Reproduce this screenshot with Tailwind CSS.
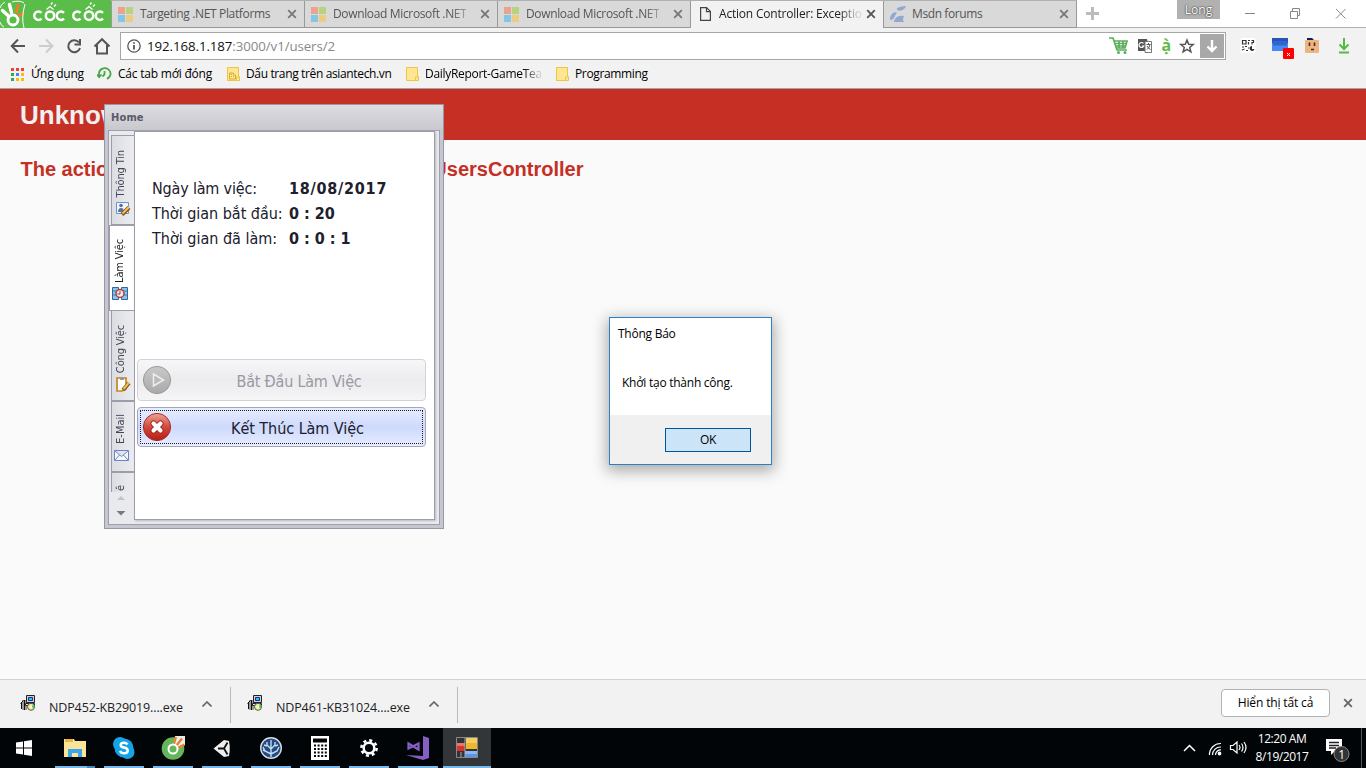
<!DOCTYPE html>
<html lang="vi">
<head>
<meta charset="utf-8">
<title>Action Controller: Exception caught</title>
<script src="https://cdn.jsdelivr.net/npm/@tailwindcss/browser@4"></script>
</head>
<body class="relative flex h-[768px] w-[1366px] flex-col overflow-hidden bg-[#fafafa] font-['Open_Sans','Noto_Sans',sans-serif] text-xs text-black">
<svg width="0" height="0" class="absolute">
  <defs>
    <symbol id="ms" viewBox="0 0 15 15"><path fill="#eca38e" d="M0 0h7v7H0z"/><path fill="#b7d283" d="M8 0h7v7H8z"/><path fill="#84c6e6" d="M0 8h7v7H0z"/><path fill="#edcc82" d="M8 8h7v7H8z"/></symbol>
    <symbol id="x" viewBox="0 0 10 10"><path d="M1.200 1.200l7.600 7.600M8.800 1.200L1.200 8.800" stroke="currentColor" stroke-width="1.800"/></symbol>
    <symbol id="folder" viewBox="0 0 13 15"><path d="M.5 .5h11v9h1v4h-12z" fill="#fee692" stroke="#eac648"/><path d="M9.500 13.500v-3.500h2" fill="none" stroke="#eac648"/></symbol>
    <symbol id="setup" viewBox="0 0 16 16"><path d="M2 5h5v10H2z" fill="#999"/><path d="M.5 8.500l3-3M1.500 14V8M4.500 5v10" stroke="#111"/><path d="M6.500 .5h8v7h-8z" fill="#d0d0d0" stroke="#222"/><path d="M8.500 2.500h4v3h-4z" fill="#18d0f0" stroke="#1b28a0"/><path d="M5.500 8.500h9v2h-9z" fill="#eee" stroke="#222"/><circle cx="11" cy="11.800" r="3.500" fill="#f0ef90" stroke="#555"/><path d="M11 11.500l3-2v4z" fill="#3ecb6c"/><circle cx="11" cy="11.800" r="1" fill="#fff"/></symbol>
    <linearGradient id="redG" x1="0" y1="0" x2="0" y2="1"><stop offset="0" stop-color="#eba596"/><stop offset=".5" stop-color="#d24a3c"/><stop offset="1" stop-color="#b51d18"/></linearGradient>
    <linearGradient id="grayG" x1="0" y1="0" x2="0" y2="1"><stop offset="0" stop-color="#c9c9c9"/><stop offset="1" stop-color="#a9a9a9"/></linearGradient>
  </defs>
</svg>

<!-- Tab strip -->
<header class="flex h-7 shrink-0 bg-white">
  <div class="flex h-7 w-[111px] shrink-0 items-center bg-[#5bbd49]">
    <svg width="111" height="28" viewBox="0 0 111 28" fill="none"><circle cx="13" cy="20" r="5" stroke="#fff" stroke-width="2.800"/><path d="M2.500 10.500l5.500 5M9.500 4.500l2 8" stroke="#fff" stroke-width="3.400" stroke-linecap="round"/><path d="M16.500 12l1.500-7M19 15.500l3.500-1.500" stroke="#f47b2c" stroke-width="2.800" stroke-linecap="round"/><path d="M12 2q8-2 12 1M25 4q-4 14-1 24M0 8Q1 4 5 2M0 22q1 4 4 5" stroke="#fff"/>
      <g stroke="#fff" stroke-width="2.500"><path d="M41.500 12.800a4.200 4.200 0 1 0 0 5.800"/><circle cx="50" cy="15.700" r="4.200"/><path d="M64 12.800a4.200 4.200 0 1 0 0 5.800"/><path d="M80.500 12.800a4.200 4.200 0 1 0 0 5.800"/><circle cx="89" cy="15.700" r="4.200"/><path d="M103 12.800a4.200 4.200 0 1 0 0 5.800"/></g>
      <path d="M46.500 9.500l3.500-3 3.500 3M85.500 9.500l3.500-3 3.500 3M51 4.500l1.500-2M54 6.500l2-2M90 4.500l1.500-2M93 6.500l2-2" stroke="#fff" stroke-width="1.300"/></svg>
  </div>
  <nav class="flex h-7 border-t border-[#b0b0b0] text-[#555]">
    <div class="flex w-[194px] items-center border-r border-b border-l border-[#999] bg-[#d9d9d9] pr-[7px] pl-1.5"><svg class="size-[15px] shrink-0"><use href="#ms"/></svg><span class="ml-[7px] tracking-[-0.35px] whitespace-nowrap">Targeting .NET Platforms</span><svg class="ml-auto size-2.5 shrink-0 text-[#777]"><use href="#x"/></svg></div>
    <div class="flex w-[193px] items-center border-r border-b border-[#999] bg-[#d9d9d9] pr-[7px] pl-1.5"><svg class="size-[15px] shrink-0"><use href="#ms"/></svg><span class="ml-[7px] tracking-[-0.35px] whitespace-nowrap [mask-image:linear-gradient(to_right,black_118px,#0005_135px)]">Download Microsoft .NET</span><svg class="ml-auto size-2.5 shrink-0 text-[#777]"><use href="#x"/></svg></div>
    <div class="flex w-[193px] items-center border-r border-b border-[#999] bg-[#d9d9d9] pr-[7px] pl-1.5"><svg class="size-[15px] shrink-0"><use href="#ms"/></svg><span class="ml-[7px] tracking-[-0.35px] whitespace-nowrap [mask-image:linear-gradient(to_right,black_118px,#0005_135px)]">Download Microsoft .NET</span><svg class="ml-auto size-2.5 shrink-0 text-[#777]"><use href="#x"/></svg></div>
    <div class="flex w-[192px] items-center border-b border-[#f2f2f2] bg-[#f2f2f2] pr-[7px] pl-[9px] text-[#222]"><svg width="11" height="14" viewBox="0 0 11 14" fill="none" stroke="#444" stroke-width="1.200"><path d="M.6.600h6l3.800 3.800v9H.6zM6.500.600v4h4"/></svg><span class="ml-2 tracking-[-0.2px] whitespace-nowrap [mask-image:linear-gradient(to_right,black_120px,#0002_140px)]">Action Controller: Exceptio</span><svg class="ml-auto size-2.5 shrink-0 text-[#555]"><use href="#x"/></svg></div>
    <div class="flex w-[194px] items-center border-r border-b border-l border-[#999] bg-[#d9d9d9] pr-[7px] pl-1.5"><svg width="16" height="16" viewBox="0 0 16 16"><path fill="#92a9cf" d="M7 2q4-2 9-2l-1 2q-3 4-8 2zM0 14q0-8 7-8L4 12q-1 2-4 2zM4 15q2-6 10-5l-1 3q0 3 2 3H4z"/></svg><span class="ml-1.5 tracking-[-0.4px]">Msdn forums</span><svg class="ml-auto size-2.5 shrink-0 text-[#777]"><use href="#x"/></svg></div>
  </nav>
  <div class="flex flex-1 border-b border-[#b0b0b0] pl-[9px]">
    <svg class="mt-[7px]" width="13" height="13"><path d="M6.500 0v13M0 6.500h13" stroke="#bbb" stroke-width="3"/></svg>
    <div class="ml-[78px] flex h-[19px] w-[43px] items-center justify-center bg-[#b1b1b1] text-xs text-white [text-shadow:0_0_2px_#333,0_0_1px_#333]">Long</div>
    <svg class="mt-2 ml-[25px]" width="102" height="12" fill="none" stroke="#888"><path d="M0 5.500h10M45.500 3.500h7v7h-7zM47.500 3V.5h7v7H53M91 1l9.500 9.500M100.500 1L91 10.500"/></svg>
  </div>
</header>

<!-- Toolbar -->
<section class="flex h-9 shrink-0 items-center bg-[#f2f2f2] pl-2.5">
  <svg class="shrink-0" width="110" height="20" viewBox="0 0 110 20" fill="none" stroke="#555" stroke-width="2"><path d="M15 10H2M8 3.500L1.700 10 8 16.500"/><path stroke="#ccc" d="M29 10h13M36 3.500l6.500 6.500-6.500 6.500"/><path d="M69 6.500A6 6 0 1 0 70 12M70 3v5.500h-5.500"/><path d="M84.500 10.500L92 3.200l7.500 7.300M87 9v8.500h10V9"/></svg>
  <div class="flex h-7 w-[1106px] shrink-0 items-center border border-[#a6a6a6] bg-white">
    <svg class="ml-1.5 shrink-0" width="14" height="14" fill="none" stroke="#555" stroke-width="1.300"><circle cx="7" cy="7" r="6.200"/><path d="M7 6v4.500M7 3.200v1.600" stroke-width="1.800"/></svg>
    <span class="ml-1.5 w-[959px] pt-px text-[13.300px] tracking-[-0.09px] text-[#888]"><span class="text-[#111]">192.168.1.187</span>:3000/v1/users/2</span>
    <svg class="shrink-0" width="118" height="26" viewBox="0 0 118 26" fill="none">
      <path d="M3 5h4l4 12h10M8.500 8H21l-2 7h-8.500M9 10.500h12M10 13h10M13 8v7M17 8v7" stroke="#5bae5b" stroke-width="1.700"/><circle cx="12.500" cy="19.500" r="1.500" fill="#5bae5b"/><circle cx="19" cy="19.500" r="1.500" fill="#5bae5b"/>
      <path d="M32 6h9l3 12H32z" fill="#555"/><path d="M39 8.500h6.500v11H39z" fill="#fff" stroke="#777"/><path d="M37.500 10.500a2.500 2.500 0 1 0 .3 2.500h-2" stroke="#fff" stroke-width="1.200"/><path d="M40.500 11.500h4M42.500 10v1.500M44 11.500q-1 4-3 5M41 13q1 2 3.500 3.500" stroke="#555"/>
      <text x="55.500" y="17.500" fill="#62bb46" font-family="Noto Sans" font-weight="700" font-size="16">ạ̀</text>
      <path d="M81 7l1.700 4.300 4.500.2-3.500 2.900 1.200 4.400-3.900-2.500-3.900 2.500 1.200-4.400-3.500-2.900 4.500-.2z" stroke="#555" stroke-width="1.500"/>
      <path d="M94 1h24v24H94z" fill="#a8a8a8"/><path d="M106 7v11M101.500 13.500l4.500 4.500 4.500-4.500" stroke="#fff" stroke-width="2.400"/>
    </svg>
  </div>
  <svg class="ml-[14px] shrink-0" width="116" height="28" viewBox="0 0 116 28" fill="none">
    <rect x=".5" y="6" width="15" height="15" rx="2" fill="#fff"/><path d="M2.500 8.500H6V12H2.500zM8 8.500h2M11.500 8.500h2v2h-1.500v2M8.500 10v2.500M2 15h2M5 14.500h2M2 18l2.500-1M6 18.500h2M8 16h1.500" stroke="#333" stroke-width="1.200"/><path d="M12 14a2.500 2.500 0 1 0 2.500 3H12z" fill="#333"/>
    <path d="M32 8h16v11H32z" fill="#4888f0"/><path d="M32 6h16v5H32z" fill="#2855b8"/><path d="M33 9h14v4.500H33z" fill="#2e66d2"/><rect x="43" y="16" width="11" height="11" rx="1" fill="#f00"/><path d="M47 21l3 3M50 21l-3 3" stroke="#fff"/>
    <rect x="65" y="8" width="14" height="13" rx="1" fill="#f0b480"/><path d="M67 6h5l2 2h-7z" fill="#152050"/><path d="M69.500 10.500v3.500M74.500 10.500v3.500M71 17.500h3" stroke="#333" stroke-width="1.600"/>
    <path d="M104 6v11M99.500 12.500l4.500 4.500 4.500-4.500M99 20.500h10" stroke="#55b944" stroke-width="2"/>
  </svg>
</section>

<!-- Bookmarks -->
<section class="flex h-[25px] shrink-0 items-center border-b border-[#a0a4a8] bg-[#f2f2f2] pb-[4px] pl-[11px] whitespace-nowrap">
  <svg class="shrink-0" width="13" height="13"><path fill="#ea4335" d="M0 0h3v3H0zM5 0h3v3H5zM10 0h3v3h-3z"/><path fill="#34a853" d="M0 5h3v3H0zM0 10h3v3H0z"/><path fill="#4285f4" d="M5 5h3v3H5z"/><path fill="#fbbc05" d="M10 5h3v3h-3zM5 10h3v3H5zM10 10h3v3h-3z"/></svg>
  <span class="ml-[7px] w-[66px] tracking-[-0.25px]">Ứng dụng</span>
  <svg class="shrink-0" width="15" height="14" fill="none" stroke="#4aa648" stroke-width="1.800"><path d="M2 9.500V6a5.800 5.500 0 1 1 8 5.800M0 7.500l2.200 2.700L4.500 7.500M7.500 4v3.500L5.500 9.500"/></svg>
  <span class="ml-1.5 w-[109px] tracking-[-0.22px]">Các tab mới đóng</span>
  <svg class="shrink-0" width="13" height="15"><use href="#folder"/><path d="M2.500 12V6h4v2h2v4zM4 7.500h1M4 9.500h1M6 9.500h1" stroke="#d9a92c" fill="none"/></svg>
  <span class="ml-1.5 w-[160px] tracking-[-0.36px]">Dấu trang trên asiantech.vn</span>
  <svg class="shrink-0" width="13" height="15"><use href="#folder"/></svg>
  <span class="ml-1.5 w-[131px]"><span class="inline-block tracking-[-0.3px] [mask-image:linear-gradient(to_right,black_98px,#0001_117px)]">DailyReport-GameTea</span></span>
  <svg class="shrink-0" width="13" height="15"><use href="#folder"/></svg>
  <span class="ml-1.5 tracking-[-0.35px]">Programming</span>
</section>

<!-- Page -->
<main class="flex flex-1 flex-col font-['Liberation_Sans',Arial,sans-serif] font-bold">
  <h1 class="h-[51px] bg-[#c52f24] pt-[11px] pl-5 text-[26px] leading-[31px] text-[#f0f0f0]">Unknown action</h1>
  <h2 class="flex w-[583.500px] justify-between pt-[17px] pl-[20.500px] text-xl leading-[25px] text-[#c52f24]"><span>The action could not be found for</span><span>UsersController</span></h2>
</main>

<!-- Downloads -->
<section class="flex h-[49px] shrink-0 items-center border-t border-[#d2d2d2] bg-[#f2f2f2] pl-5 text-[#222]">
  <svg class="mb-0.5 size-4"><use href="#setup"/></svg><span class="ml-[13px] w-[153px] pt-2 text-[12.500px] tracking-[-0.13px]">NDP452-KB29019....exe</span>
  <svg width="10" height="6" fill="none" stroke="#666" stroke-width="1.600"><path d="M.5 5.500L5 1l4.500 4.500"/></svg>
  <span class="mt-0.5 ml-[18px] h-9 w-px bg-[#bbb]"></span>
  <svg class="mb-0.5 ml-4 size-4"><use href="#setup"/></svg><span class="ml-[13px] w-[153px] pt-2 text-[12.500px] tracking-[-0.13px]">NDP461-KB31024....exe</span>
  <svg width="10" height="6" fill="none" stroke="#666" stroke-width="1.600"><path d="M.5 5.500L5 1l4.500 4.500"/></svg>
  <span class="mt-0.5 ml-[18px] h-9 w-px bg-[#bbb]"></span>
  <button class="mr-[13px] mb-0.5 ml-auto h-7 w-[109px] rounded-sm border border-[#b2b2b2] bg-white tracking-[-0.15px] text-black">Hiển thị tất cả</button>
  <svg class="mr-[13px] mb-0.5 size-2.5 text-[#666]"><use href="#x"/></svg>
</section>

<!-- Taskbar -->
<footer class="flex h-10 shrink-0 bg-[#020507] text-white">
  <div class="flex w-[51px] items-center justify-center"><svg class="mr-[3px]" width="16" height="16" fill="#fff"><path d="M0 2.500l7-1v6H0zM8 1.300L16 0v7.500H8zM0 8.500h7v6l-7-1zM8 8.500h8V16l-8-1.200z"/></svg></div>
  <div class="flex gap-[1px]">
    <div class="flex w-12 flex-col items-center justify-between"><svg class="mt-[10px]" width="22" height="20"><path d="M0 1h10l1 2h11v16H0z" fill="#fbe397"/><path d="M1 1h8v3H1z" fill="#e9b93e"/><path d="M4 19v-8h14v8h-4v-4H8v4z" fill="#3aa7e8"/></svg><div class="flex h-0.5 w-10"><span class="w-8 bg-[#76b9ed]"></span><span class="flex-1 bg-[#4d85b0]"></span></div></div>
    <div class="flex w-12 flex-col items-center justify-between"><svg class="mt-2" width="24" height="24"><circle cx="8" cy="8" r="7" fill="#15a3e8"/><circle cx="15.500" cy="16" r="7" fill="#15a3e8"/><circle cx="12" cy="12" r="9.500" fill="#15a3e8"/><path d="M15.500 8.500Q14 6.500 11.500 6.700 8.500 7 8.700 9.200 9 11 12 11.500q3.700.7 3.700 3 0 2.700-3.500 2.800Q9 17.300 8 15" stroke="#fff" stroke-width="2.500" fill="none"/></svg><span class="h-0.5 w-10 bg-[#76b9ed]"></span></div>
    <div class="flex w-12 flex-col items-center justify-between"><svg class="mt-2" width="24" height="24" fill="none"><circle cx="12" cy="12.500" r="11.300" fill="#63b75a"/><path d="M13 9L14 0h10v9l-7 4z" fill="#e8efe6"/><path d="M13 8.500L15 1M16.500 12l7-3.500" stroke="#f07a2c" stroke-width="2"/><path d="M15.500 9.500L21 2.500" stroke="#f07a2c" stroke-width="2.200"/><circle cx="12" cy="13" r="4.500" fill="#63b75a" stroke="#fff" stroke-width="2"/></svg><span class="h-0.5 w-10 bg-[#76b9ed]"></span></div>
    <div class="flex w-12 flex-col items-center justify-between"><svg class="mt-[11px]" width="18" height="19"><path d="M.5 9.500L11 1l5 1 .7 5v5L16 17l-5 1z" fill="#eee"/><path d="M5 9.500h6l3.500-6M11 9.500l3.500 6" stroke="#111" stroke-width="1.800" fill="none"/></svg><span class="h-0.5 w-10 bg-[#76b9ed]"></span></div>
    <div class="flex w-12 flex-col items-center justify-between"><svg class="mt-2" width="24" height="24" fill="none"><circle cx="12" cy="12" r="10.300" fill="#244c83" stroke="#d5dde8" stroke-width="1.400"/><path d="M12 21V4M12 18l-6-3-2-4M6 15l-2-1M12 13L8 9V6M12 18l6-3 2-4M12 13l4-4V6M8 10l-3-1M16 10l3-1" stroke="#c6dced" stroke-width="1.400"/></svg><span class="h-0.5 w-10 bg-[#76b9ed]"></span></div>
    <div class="flex w-12 flex-col items-center justify-between"><svg class="mt-2" width="18" height="24"><path d="M0 0h18v24H0z" fill="#fff"/><path d="M2 2.500h14v4H2z" fill="#020507"/><path d="M3 9.500h13M3 13h13M3 16.500h13M3 20h13" stroke="#020507" stroke-width="1.800" stroke-dasharray="2 1.600"/></svg><span class="h-0.5 w-10 bg-[#76b9ed]"></span></div>
    <div class="flex w-12 flex-col items-center justify-between"><svg class="mt-[11px]" width="18" height="18" fill="none" stroke="#fff"><circle cx="9" cy="9" r="5.300" stroke-width="2.500"/><circle cx="9" cy="9" r="7.600" stroke-width="2.600" stroke-dasharray="3 2.969"/></svg><span class="h-0.5 w-10 bg-[#76b9ed]"></span></div>
    <div class="flex w-12 flex-col items-center justify-between"><svg class="mt-2" width="24" height="24"><path d="M17 0l6 2v20l-6 2L0 19l17 1z" fill="#865fc5"/><path d="M2.500 7.500v5l10-5v6l-10-6z" fill="none" stroke="#865fc5" stroke-width="2.200"/></svg><span class="h-0.5 w-10 bg-[#76b9ed]"></span></div>
    <div class="flex w-12 flex-col items-center justify-between bg-[#333638]"><svg class="mt-[9px]" width="22" height="21"><path d="M.5.5h21v20H.5z" fill="#333" stroke="#888"/><path d="M1 6h8v8H1z" fill="#d8342c"/><path d="M1 6h8v3H1z" fill="#e6766e"/><path d="M10 1h11v11H10z" fill="#edb92c"/><path d="M10 1h11v5H10z" fill="#f3cf60"/><path d="M9 14h12v6H9z" fill="#5b96ee"/><path d="M9 14h12v3H9z" fill="#8db8f8"/><path d="M5 15v5M9 1v19" stroke="#aaa"/></svg><span class="h-0.5 w-full bg-[#76b9ed]"></span></div>
  </div>
  <div class="ml-auto flex items-center">
    <svg width="64" height="20" viewBox="0 0 64 20" fill="none" stroke="#fff" stroke-width="1.200"><path d="M1 13l5.500-5.500L12 13" stroke-width="1.500"/><path d="M26.500 17A11 11 0 0 1 38 5.500M29.500 17a8 8 0 0 1 8.500-8M32.500 17a5 5 0 0 1 5.500-5"/><circle cx="36.500" cy="15.500" r="1.300" fill="#fff"/><path d="M47.500 7.500h2.500l4-3.500v11l-4-3.500h-2.500zM56 7q2 2.500 0 5M58.500 5.500q3 4 0 8M61 4q4 5.500 0 11"/></svg>
    <div class="ml-2 w-[54px] text-center text-[12px] leading-[18px] tracking-[-0.45px] whitespace-nowrap">12:20 AM<br>8/19/2017</div>
    <svg class="mt-1 ml-4" width="27" height="26"><path d="M1 2h16v12h-7l-4 4v-4H1z" fill="#fff"/><path d="M4 5.500h10M4 8.500h10M4 11h7" stroke="#222" stroke-width="1.300"/><circle cx="16.500" cy="17" r="7.500" fill="#333" stroke="#888"/><text x="13.200" y="21.500" fill="#fff" font-size="12">1</text></svg>
    <span class="ml-[9px] h-10 w-px bg-[#555]"></span><span class="w-1"></span>
  </div>
</footer>

<!-- Home window -->
<section class="absolute top-[104px] left-[104px] flex h-[425px] w-[340px] flex-col border border-[#9798a3] bg-[#c5c6cf] px-[3px] pb-[3px] font-['DejaVu_Sans_Condensed','DejaVu_Sans','Noto_Sans',sans-serif] shadow-[inset_0_1px_#e6e6ea]">
  <div class="-mx-[3px] h-[25px] bg-linear-to-b from-[#dcdce1] to-[#c8c8cf] pt-[5px] pl-1.5 text-[11px] leading-4 font-bold tracking-[0.15px] text-[#5a5a68]">Home</div>
  <div class="flex flex-1 border border-[#9fa0ab] bg-[#e9eaee] pr-[5px] pb-1">
    <div class="flex w-[25px] shrink-0 flex-col text-[11px] text-[#444455]">
      <div class="mt-1 ml-0.5 flex h-[90px] flex-col items-center justify-end gap-1 border border-r-0 border-[#9c9da9] bg-linear-to-r from-[#dcdde2] to-[#ecedf0] pb-2"><span class="mr-1 rotate-180 tracking-[-0.15px] [writing-mode:vertical-rl]">Thông Tin</span><svg width="15" height="15" fill="none"><path d="M.5 1.500h12v11H.5z" fill="#f3f6fd" stroke="#6e92d0"/><circle cx="5" cy="4.500" r="1.800" fill="#57729b"/><path d="M2 11q0-4 3-4t3 4z" fill="#57729b"/><path d="M6 13.500l7-7" stroke="#86521a" stroke-width="4"/><path d="M6.500 12.500l6.500-6.500" stroke="#f5c057" stroke-width="2"/></svg></div>
      <div class="flex h-[86px] flex-col items-center justify-end gap-1 border-y border-l border-[#9c9da9] bg-white pr-1 pb-2.5 text-[#222]"><span class="rotate-180 tracking-[-0.15px] [writing-mode:vertical-rl]">Làm Việc</span><svg width="16" height="13"><path d="M.5.5h6v12h-6zM9.500.5h6v12h-6z" fill="#84c6ee" stroke="#33669a"/><path d="M1 4h5M1 8h5M10 4h5M10 8h5" stroke="#3f7eaa"/><circle cx="8" cy="6.500" r="4" fill="#f5e8e6" stroke="#bb3540" stroke-width="1.500"/><path d="M8 4v3H5.500" stroke="#654" fill="none"/></svg></div>
      <div class="ml-0.5 flex h-[90px] flex-col items-center justify-end gap-[3px] border-b border-l border-[#9c9da9] bg-linear-to-r from-[#dcdde2] to-[#ecedf0] pb-2"><span class="mr-1 rotate-180 tracking-[-0.15px] [writing-mode:vertical-rl]">Công Việc</span><svg width="15" height="16" fill="none"><path d="M1 2h9v11l-4 2H1z" fill="#fff" stroke="#c88222" stroke-width="1.700"/><path d="M4 1h4v3H4z" fill="#999"/><path d="M7 14l6-7" stroke="#85571f" stroke-width="4"/><path d="M7.500 13l5.500-6.500" stroke="#f2bf58" stroke-width="2"/></svg></div>
      <div class="ml-0.5 flex h-[71px] flex-col items-center justify-end gap-1.5 border-y border-l border-[#9c9da9] bg-linear-to-r from-[#dcdde2] to-[#ecedf0] pr-1 pb-2.5"><span class="rotate-180 [writing-mode:vertical-rl]">E-Mail</span><svg width="15" height="11" fill="#f5f8ff" stroke="#6c85c5"><path d="M.5.5h14v10H.5zM1 1l6.500 5.500L14 1M1 10l4.500-5M14 10l-4.500-5"/></svg></div>
      <div class="ml-0.5 flex h-5 flex-col items-center overflow-hidden border-t border-l border-[#9c9da9] bg-linear-to-r from-[#dcdde2] to-[#ecedf0] pt-[12px] pr-1"><span class="rotate-180 leading-3 [writing-mode:vertical-rl]">ê</span></div>
      <svg class="mt-[3px] ml-[7px]" width="10" height="22"><path d="M1 5l4-4 4 4z" fill="#c2c3ca"/><path d="M.5 16l4.500 4.500L9.500 16z" fill="#777884"/></svg>
    </div>
    <div class="flex flex-1 flex-col border border-[#9c9da9] bg-white pr-2 pl-0.5 text-[#20202c] shadow-[1px_1px_2px_#bbb]">
      <dl class="grid grid-cols-[137px_1fr] pt-11 pl-[15px] text-[16px] leading-[25px] whitespace-nowrap">
        <dt class="tracking-[-0.18px]">Ngày làm việc:</dt><dd class="font-bold tracking-[0.75px]">18/08/2017</dd>
        <dt class="tracking-[-0.02px]">Thời gian bắt đầu:</dt><dd class="font-bold">0 : 20</dd>
        <dt>Thời gian đã làm:</dt><dd class="font-bold">0 : 0 : 1</dd>
      </dl>
      <button class="mt-[108px] flex h-[42px] w-[289px] items-center rounded-sm border border-[#d2d3d8] bg-linear-to-b from-[#f7f7f9] via-[#ececef] to-[#f5f5f7] pl-[5px] text-[16px] text-[#9899a3]"><svg width="28" height="28"><circle cx="14" cy="14" r="13.600" fill="url(#grayG)" stroke="#999"/><path d="M10.500 8l10 6-10 6z" fill="#bbb" stroke="#eee" stroke-width="1.500"/></svg><span class="flex-1 pt-[3px] pl-0.5 tracking-[-0.2px]">Bắt Đầu Làm Việc</span></button>
      <button class="mt-1.5 h-10 w-[289px] rounded-sm border border-[#a5a6b5] bg-linear-to-b from-[#e8edff] via-[#cedafd] to-[#e6ecff] p-0.5 text-[16px]"><span class="flex h-full items-center border border-dotted border-[#20202c] pl-0.5"><svg width="28" height="28"><circle cx="14" cy="14" r="13.600" fill="url(#redG)" stroke="#a92b25"/><path d="M10.500 10.500l7 7M17.500 10.500l-7 7" stroke="#9c211c" stroke-width="6" stroke-linecap="round"/><path d="M10.500 10.500l7 7M17.500 10.500l-7 7" stroke="#fff" stroke-width="4.200" stroke-linecap="round"/></svg><span class="flex-1 pt-[3px] pl-0.5 tracking-[-0.05px]">Kết Thúc Làm Việc</span></span></button>
    </div>
  </div>
</section>

<!-- Message box -->
<section class="absolute top-[317px] left-[609px] flex h-[148px] w-[163px] flex-col border border-[#2d7fc8] bg-white tracking-[-0.25px] shadow-[0_4px_14px_2px_rgba(0,0,0,0.32)]">
  <div class="flex-1 pt-2 pl-2"><p class="leading-4">Thông Báo</p><p class="mt-[33px] pl-1 leading-4">Khởi tạo thành công.</p></div>
  <div class="flex h-[49px] justify-end bg-[#f0f0f0] pt-[13px] pr-5"><button class="h-6 w-[86px] border border-[#00569b] bg-[#cce4f7]">OK</button></div>
</section>
</body>
</html>
